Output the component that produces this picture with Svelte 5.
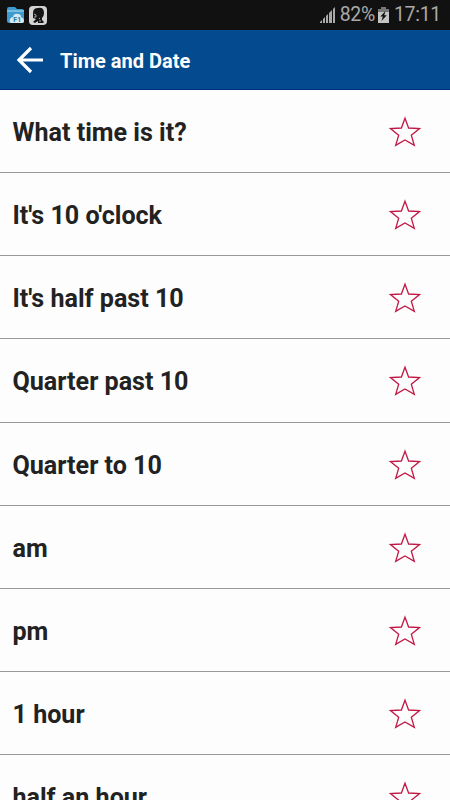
<script lang="ts">
	type Phrase = { id: number; text: string };

	const title = 'Time and Date';

	const phrases: Phrase[] = [
		'What time is it?',
		"It's 10 o'clock",
		"It's half past 10",
		'Quarter past 10',
		'Quarter to 10',
		'am',
		'pm',
		'1 hour',
		'half an hour'
	].map((text, id) => ({ id, text }));

	let favourites: number[] = $state([]);

	const toggleFavourite = (id: number) => {
		favourites = favourites.includes(id)
			? favourites.filter((x) => x !== id)
			: [...favourites, id];
	};
</script>

<div class="screen">
	<div class="status">
		<div class="notifications">
			<svg class="folder" width="18" height="18" viewBox="0 0 18 18">
				<path d="M0 3q0-2 2-2h6l2 2h5q2 0 2 2v10q0 2-2 2H2q-2 0-2-2z" fill="#3d9bd0" />
				<path d="M0 5h17" stroke="#8cc9e6" stroke-width="1.5" />
				<path d="M4 17q-2-1-1-4 1-2 3-2 1-4 5-3 3 0 3 3 3 1 3 4 0 2-2 2z" fill="#d5e9f2" />
				<text x="6.3" y="15.5">F1</text>
			</svg>
			<svg width="18" height="19" viewBox="0 0 18 19">
				<rect width="18" height="19" rx="4" fill="#d4d4d4" />
				<path
					d="M4 7q0-5 5-5 6-1 6 5 0 3-2 5v2l2 2-1 1H9v-2l-3 2-2-1 3-3-3-1V9z"
					fill="#151515"
				/>
				<path d="M5 8l2 1v2H5M10 12l1 1M10 15h2" fill="none" stroke="#aaa" />
			</svg>
		</div>
		<div class="system">
			<svg class="signal" width="16" height="16" viewBox="0 0 16 16" fill="#a9a9a9">
				<path d="M0 16v-1l2-2v3zM3 16v-4l2-2v6zM6 16V9l2-2v9zM9 16V6l3-3v13zM13 16V2l2-2v16z" />
			</svg>
			<span class="percent">82%</span>
			<svg class="battery" width="11" height="16" viewBox="0 0 11 16">
				<path d="M3 0h5v2h3v14H0V2h3z" fill="#c4c4c4" />
				<path d="M3 0h5v2h3v3H0V2h3z" fill="#777" />
				<path d="M7.5 4L2.3 9.5h2.5L3.5 14l5.3-5.8H6.3z" fill="#111" />
			</svg>
			<span class="clock">17:11</span>
		</div>
	</div>

	<header>
		<button class="back" aria-label="Back">
			<svg width="28" height="28" viewBox="0 0 28 28">
				<path d="M15 2L3 14l12 12M3 14H27" />
			</svg>
		</button>
		<h1>{title}</h1>
	</header>

	<ul>
		{#each phrases as phrase (phrase.id)}
			<li>
				<span>{phrase.text}</span>
				<button
					class="star"
					class:selected={favourites.includes(phrase.id)}
					aria-label="Favourite"
					onclick={() => toggleFavourite(phrase.id)}
				>
					<svg width="34" height="32" viewBox="0 0 34 32">
						<path
							d="M17 2.2L20.6 12L31.6 12.6L23.3 19.2L26.3 29.4L17 23.9L7.7 29.4L10.7 19.2L2.4 12.6L13.4 12z"
						/>
					</svg>
				</button>
			</li>
		{/each}
	</ul>
</div>

<style>
	:global(body) {
		overflow: hidden;
	}

	.screen {
		display: flex;
		flex-direction: column;
		height: 800px;
		overflow: hidden;
		background-color: #fdfdfd;
		font-family: Roboto, sans-serif;
	}

	.status {
		display: flex;
		flex: none;
		justify-content: space-between;
		box-sizing: border-box;
		height: 30px;
		padding: 0 9px 0 7px;
		background-color: #111;
		color: #a9a9a9;
	}

	.notifications,
	.system {
		display: flex;
		align-items: center;
	}

	.notifications {
		gap: 4px;
	}

	.folder text {
		font-size: 7px;
		font-weight: 700;
		fill: #26779f;
	}

	.system {
		font-size: 19.5px;
		line-height: 30px;
		letter-spacing: -0.3px;
	}

	.percent {
		margin-left: 4px;
	}

	.battery {
		margin: 0 5px 0 3px;
	}

	header {
		display: flex;
		flex: none;
		align-items: center;
		box-sizing: border-box;
		height: 60px;
		padding-left: 15px;
		background-color: #044a8f;
		border-bottom: 1px solid #003080;
	}

	button {
		display: flex;
		padding: 0;
		border: 0;
		background-color: transparent;
		cursor: pointer;
	}

	.back {
		margin-top: 1px;
	}

	.back svg {
		overflow: visible;
	}

	.back path {
		fill: none;
		stroke: white;
		stroke-width: 3.2;
		transform: translateX(1px);
	}

	h1 {
		margin: 2px 0 0 17px;
		color: white;
		font-size: 20px;
		font-weight: 700;
		line-height: 24px;
	}

	ul {
		margin: 0;
		padding: 0;
		list-style: none;
	}

	li {
		display: flex;
		align-items: center;
		justify-content: space-between;
		box-sizing: border-box;
		height: 83.14px;
		padding: 2px 28px 0 12.5px;
		border-bottom: 1px solid #999;
		color: #222;
		font-size: 25.1px;
		font-weight: 700;
		line-height: 30px;
	}

	li span {
		padding-top: 2px;
	}

	.star path {
		fill: none;
		stroke: #c21846;
		stroke-width: 1.3;
	}

	.star.selected path {
		fill: #c21846;
	}
</style>
